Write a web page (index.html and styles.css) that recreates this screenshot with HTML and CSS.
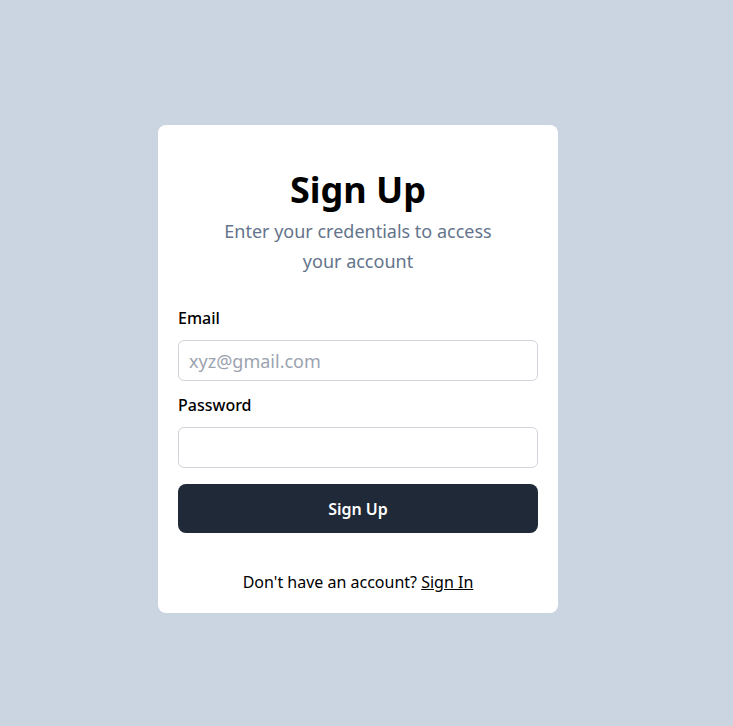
FILE: index.html
```html
<!DOCTYPE html>
<html lang="en">
<head>
  <meta charset="UTF-8">
  <title>Sign Up</title>
  <link rel="stylesheet" href="styles.css">
</head>
<body>
  <div class="card">
    <h1 class="title">Sign Up</h1>
    <p class="subtitle">Enter your credentials to access your account</p>

    <form class="form">
      <label class="label" for="email">Email</label>
      <input class="input" id="email" type="email" placeholder="xyz@gmail.com">
      <label class="label label-gap" for="password">Password</label>
      <input class="input" id="password" type="password">
      <button class="submit" type="button">Sign Up</button>
    </form>

    <p class="footer">Don't have an account? <a class="link" href="#">Sign In</a></p>
  </div>
</body>
</html>
```

FILE: styles.css
```css
* {
  box-sizing: border-box;
  margin: 0;
  padding: 0;
}

body {
  background-color: #cbd5e1;
  min-height: 100vh;
  font-family: "Noto Sans", "Open Sans", sans-serif;
  display: flex;
  justify-content: center;
  align-items: center;
  padding-top: 12px;
  padding-right: 17px;
}

.card {
  background: white;
  width: 400px;
  border-radius: 8px;
  padding: 45px 20px 19px;
  display: flex;
  flex-direction: column;
}

.title {
  text-align: center;
  font-size: 36px;
  line-height: 40px;
  font-weight: 700;
  color: #000;
}

.subtitle {
  text-align: center;
  color: #64748b;
  font-size: 18px;
  line-height: 30px;
  padding: 6px 40px 0;
}

.form {
  display: flex;
  flex-direction: column;
  margin-top: 30px;
}

.label {
  font-size: 16px;
  line-height: 24px;
  font-weight: 500;
  color: #000;
}

.label-gap {
  margin-top: 12px;
}

.input {
  margin-top: 10px;
  height: 41px;
  width: 100%;
  border: 1px solid #d1d5db;
  border-radius: 6px;
  padding: 0 10px;
  font-family: "Noto Sans", "Open Sans", sans-serif;
  font-size: 18px;
  color: #111827;
  outline: none;
}

.input::placeholder {
  color: #9ca3af;
}

.submit {
  margin-top: 16px;
  height: 49px;
  border: none;
  border-radius: 8px;
  background: #1f2937;
  color: white;
  font-family: "Noto Sans", "Open Sans", sans-serif;
  font-size: 16px;
  font-weight: 600;
  cursor: pointer;
}

.footer {
  margin-top: 37px;
  text-align: center;
  font-size: 16px;
  line-height: 24px;
  color: #000;
}

.link {
  color: #000;
  text-decoration: underline;
}
```
